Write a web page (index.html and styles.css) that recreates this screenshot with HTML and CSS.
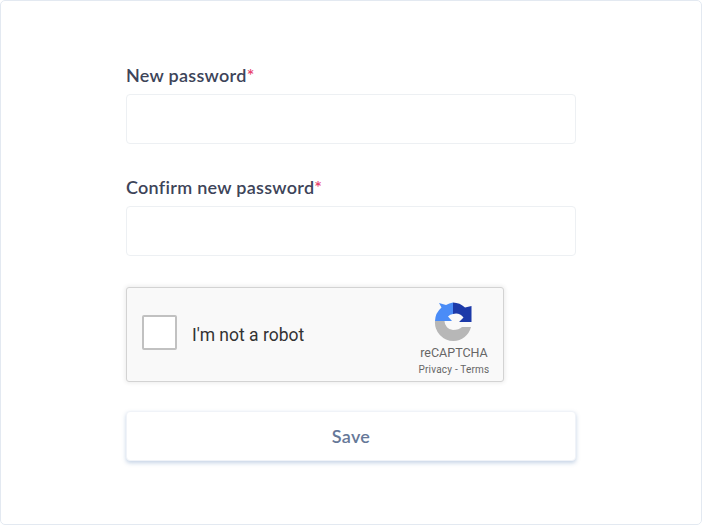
FILE: index.html
```html
<!DOCTYPE html>
<html>
<head>
  <meta charset="UTF-8">
  <title>Reset password</title>
  <link rel="stylesheet" href="styles.css">
</head>
<body>
  <div class="card">
    <form class="form">
      <div class="field">
        <label for="new-password">New password<span class="required">*</span></label>
        <input type="password" id="new-password">
      </div>
      <div class="field">
        <label for="confirm-password">Confirm new password<span class="required">*</span></label>
        <input type="password" id="confirm-password">
      </div>

      <div class="captcha">
        <div class="captcha-check"></div>
        <div class="captcha-label">I'm not a robot</div>
        <div class="captcha-brand">
          <svg class="captcha-logo" width="38" height="39" viewBox="0 0 38 39">
            <path fill="#1c3aa9" d="M19 0.5 A18.5 18.5 0 0 1 31 5.5 L37.5 4 V20 H25 L29.5 15.5 A10 10 0 0 0 19 12 Z"/>
            <path fill="#4a8cf7" d="M19 0.5 V12 A8 8 0 0 0 14 14.5 L18 19 H1 A18.5 18.5 0 0 1 7.5 5.5 L5 1 L12 3 A18.5 18.5 0 0 1 19 0.5 Z"/>
            <path fill="#b7b7b7" d="M1 19 H10.5 A9 9 0 0 0 19 28 C23 28 26 27 28 25 H37 A18.5 18.5 0 0 1 19.5 39 A18.5 18.5 0 0 1 1 19 Z"/>
          </svg>
          <div class="captcha-name">reCAPTCHA</div>
          <div class="captcha-links">Privacy - Terms</div>
        </div>
      </div>

      <button type="button" class="save">Save</button>
    </form>
  </div>
</body>
</html>
```

FILE: styles.css
```css
* {
  box-sizing: border-box;
}
body {
  margin: 0;
  font-family: Lato, "Noto Sans", sans-serif;
  background: #fff;
}
.card {
  height: 525px;
  padding-top: 65px;
  border: 1px solid #e3e9f1;
  border-radius: 5px;
  background: #fff;
}
.form {
  width: 450px;
  margin: 0 auto;
}
.field + .field {
  margin-top: 34px;
}
.field label {
  display: block;
  height: 28px;
  font-size: 18px;
  font-weight: 600;
  letter-spacing: 0.28px;
  line-height: 18px;
  color: #3d4459;
}
.required {
  color: #e8456f;
}
.field input {
  display: block;
  width: 100%;
  height: 50px;
  border: 1px solid #edf0f3;
  border-radius: 4px;
  background: #fff;
}
.captcha {
  display: flex;
  align-items: center;
  width: 378px;
  height: 95px;
  margin-top: 31px;
  padding: 0 13px 0 15px;
  border: 1px solid #d3d3d3;
  border-radius: 3px;
  background: #f9f9f9;
  box-shadow: 0 0 4px 1px rgba(0, 0, 0, 0.08);
}
.captcha-check {
  width: 35px;
  height: 35px;
  margin-bottom: 4px;
  border: 2px solid #c1c1c1;
  border-radius: 2px;
  background: #fff;
}
.captcha-label {
  flex: 1;
  margin-left: 15px;
  font-family: Roboto, sans-serif;
  font-size: 17.5px;
  color: #333;
}
.captcha-brand {
  display: flex;
  flex-direction: column;
  align-items: center;
  align-self: flex-start;
  width: 72px;
  padding-top: 14px;
  font-family: Roboto, sans-serif;
  color: #666;
}
.captcha-logo {
  display: block;
  margin-bottom: 4px;
  margin-left: -2px;
}
.captcha-name {
  font-size: 12.5px;
  line-height: 15px;
}
.captcha-links {
  margin-top: 4px;
  font-size: 10px;
  letter-spacing: 0.2px;
  line-height: 12px;
  white-space: nowrap;
}
.save {
  display: block;
  width: 100%;
  height: 50px;
  margin-top: 29px;
  padding-bottom: 2px;
  border: 1px solid #f0f3f8;
  border-radius: 4px;
  background: #fff;
  font-family: Lato, "Noto Sans", sans-serif;
  font-size: 18px;
  font-weight: 600;
  letter-spacing: 0.3px;
  color: #667898;
  box-shadow: 0 2px 4px rgba(90, 130, 180, 0.35);
}
```
